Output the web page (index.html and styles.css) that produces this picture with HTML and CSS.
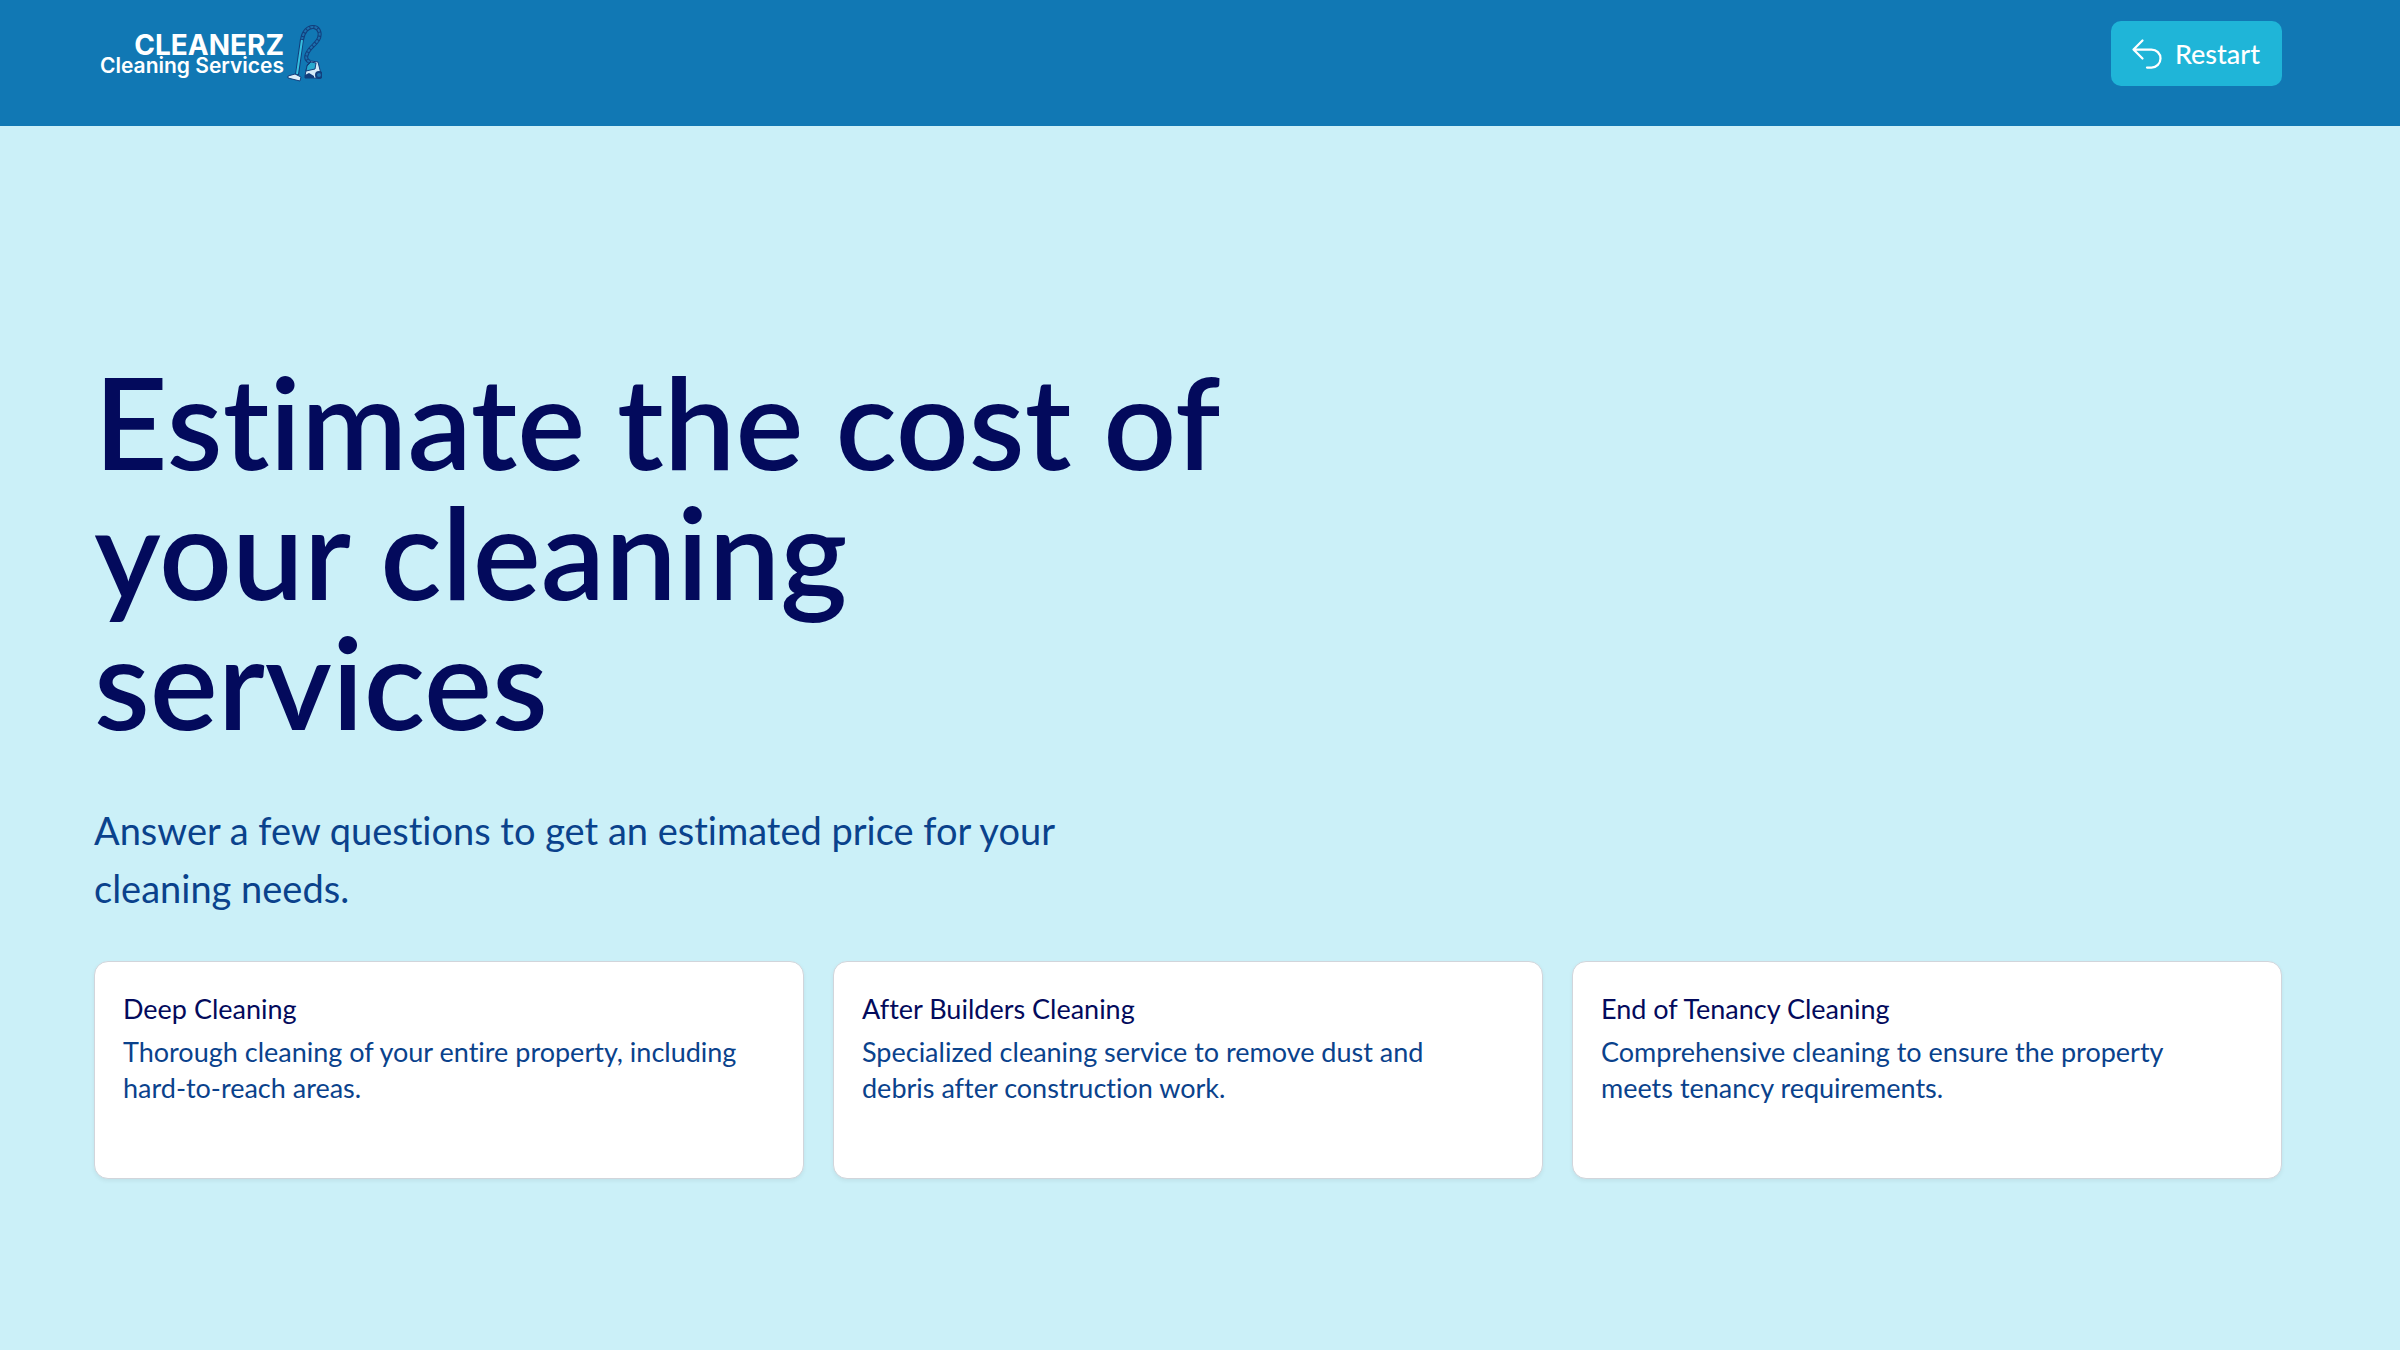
FILE: index.html
```
<!DOCTYPE html>
<html lang="en">
<head>
    <meta charset="UTF-8">
    <meta name="viewport" content="width=device-width, initial-scale=1.0">
    <title>Cleanerz Cleaning Services</title>
    <link rel="stylesheet" href="styles.css">
</head>
<body>

<header class="header">
    <a href="#" class="logo">
        <span class="logo-text">
            <span class="logo-name">CLEANERZ</span>
            <span class="logo-tagline">Cleaning Services</span>
        </span>
        <svg class="logo-icon" viewBox="0 0 36 58" fill="none" aria-hidden="true">
            <!-- hose -->
            <path d="M16 16C17 8 22 2 28 3C34 4 35 11 32 16C29 21 23 24 21 30C19 34 21 37 24 38" stroke="#123f7d" stroke-width="4"/>
            <path d="M16 16C17 8 22 2 28 3C34 4 35 11 32 16C29 21 23 24 21 30C19 34 21 37 24 38" stroke="#1b70ae" stroke-width="2" stroke-dasharray="3 1"/>
            <!-- tube and brush -->
            <path d="M16 15L11 51" stroke="#123f7d" stroke-width="4"/>
            <path d="M16 16L11 50" stroke="#35bfe0" stroke-width="2"/>
            <path d="M2 52L9 50L15 53L14 57L2 54Z" fill="#dceefa" stroke="#123f7d"/>
            <!-- body -->
            <path d="M19 52L21 41L25 37L32 38L35 50V54H19Z" fill="#d5ebf8" stroke="#123f7d"/>
            <path d="M21 42L25 38L30 39L29 45L20 47Z" fill="#28a9cf" stroke="#123f7d"/>
            <circle cx="33" cy="51" r="3" fill="#1b70ae" stroke="#123f7d" stroke-width="2"/>
            <path d="M19 51L23 49L28 52V54H19Z" fill="#123f7d"/>
        </svg>
    </a>
    <button type="button" class="btn-restart">
        <svg class="btn-icon" viewBox="0 0 24 24" fill="none" stroke="currentColor" stroke-width="1.5" stroke-linecap="round" stroke-linejoin="round" aria-hidden="true">
            <path d="M9 15 3 9m0 0 6-6M3 9h12a6 6 0 0 1 0 12h-3"/>
        </svg>
        Restart
    </button>
</header>

<main class="container">
    <h1>Estimate the cost of your cleaning services</h1>
    <p class="intro">Answer a few questions to get an estimated price for your cleaning needs.</p>

    <div class="services">
        <div class="card">
            <h2>Deep Cleaning</h2>
            <p>Thorough cleaning of your entire property, including hard-to-reach areas.</p>
        </div>
        <div class="card">
            <h2>After Builders Cleaning</h2>
            <p>Specialized cleaning service to remove dust and debris after construction work.</p>
        </div>
        <div class="card">
            <h2>End of Tenancy Cleaning</h2>
            <p>Comprehensive cleaning to ensure the property meets tenancy requirements.</p>
        </div>
    </div>
</main>

</body>
</html>
```
FILE: styles.css
```
* {
    box-sizing: border-box;
}

body {
    font-family: Lato, sans-serif;
    font-variant-ligatures: none;
    background-color: #cbf0f8;
    margin: 0;
}

h1, h2, p {
    margin: 0;
}

.header {
    display: flex;
    justify-content: space-between;
    align-items: flex-start;
    min-height: 126px;
    padding: 21px 118px 40px 94px;
    background-color: #1178b4;
}

.logo {
    display: flex;
    align-items: flex-start;
    gap: 2px;
    padding: 3px 6px;
    color: white;
    text-decoration: none;
}

.logo-text {
    display: flex;
    flex-direction: column;
    align-items: flex-end;
    padding-top: 10px;
    font-family: Inter, sans-serif;
}

.logo-name {
    font-size: 28px;
    font-weight: 700;
    line-height: 22px;
}

.logo-tagline {
    font-size: 21px;
    font-weight: 600;
    line-height: 20px;
}

.logo-icon {
    width: 36px;
    height: 58px;
}

.btn-restart {
    display: flex;
    align-items: center;
    gap: 10px;
    height: 65px;
    padding: 0 22px 0 18px;
    border: none;
    border-radius: 10px;
    background-color: #1fb5d8;
    color: white;
    font-family: inherit;
    font-size: 27px;
    font-weight: 500;
    cursor: pointer;
}

.btn-icon {
    width: 36px;
    height: 36px;
}

.container {
    padding: 230px 118px 48px 94px;
}

h1 {
    max-width: 1180px;
    color: #030a5c;
    font-size: 128px;
    font-weight: 600;
    line-height: 130px;
}

.intro {
    max-width: 1000px;
    margin-top: 55px;
    color: #0a428c;
    font-size: 38px;
    line-height: 58px;
}

.services {
    display: grid;
    grid-template-columns: repeat(3, 1fr);
    gap: 29px;
    margin-top: 44px;
}

.card {
    padding: 29px 56px 72px 28px;
    border: 1px solid #d1d5db;
    border-radius: 14px;
    background-color: white;
    box-shadow: 0 2px 4px rgba(0, 0, 0, 0.06);
}

.card h2 {
    margin-bottom: 7px;
    color: #030a5c;
    font-size: 27px;
    font-weight: 400;
    line-height: 36px;
}

.card p {
    color: #0a428c;
    font-size: 27px;
    line-height: 36px;
}
```
